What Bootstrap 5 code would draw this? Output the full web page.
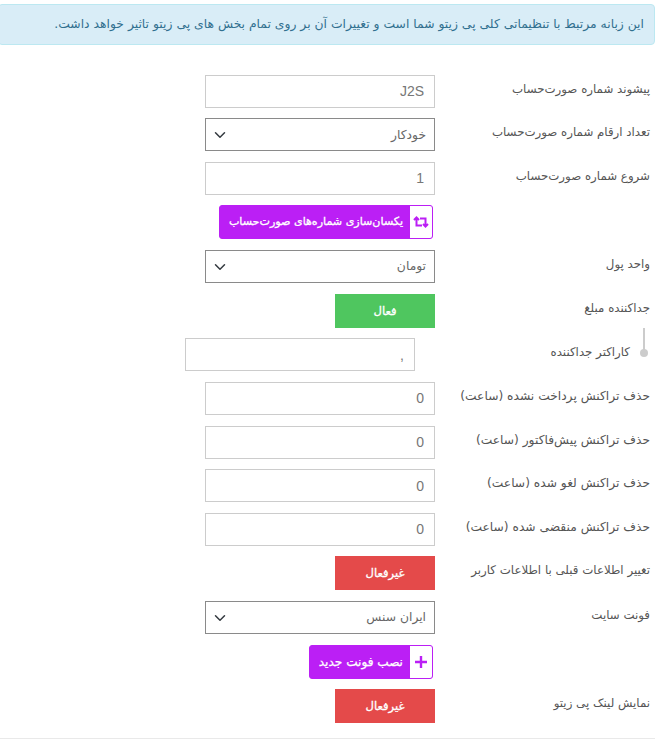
<!DOCTYPE html>
<html lang="fa" dir="rtl">
<head>
<meta charset="utf-8">
<title>تنظیمات</title>
<link rel="stylesheet" href="https://cdn.jsdelivr.net/npm/bootstrap@5.3.0/dist/css/bootstrap.min.css">
<style>
html,body{background:#fff;overflow:hidden}
body{font-family:"DejaVu Sans",sans-serif;font-size:12px;color:#555;height:745px}
.page-wrap{padding:4px 12px 0 0;margin-left:-2px}
.note{background:#d9edf7;border:1px solid #bce8f1;color:#31708f;border-radius:4px;height:41px;padding:0 10px;font-size:12.35px;margin:0 0 29.6px 0;display:flex;align-items:center;white-space:nowrap}
.field-row{display:flex;align-items:flex-start;margin-bottom:10.63px;padding-right:5px;position:relative;margin-left:2px}
.field-label{width:215px;flex:none;font-size:11.8px;line-height:29px;color:#555;white-space:nowrap}
.field-label.lab-wide{font-size:12.25px}
.field-ctl{width:230px;flex:none}
.field-row.sub{padding-right:25px}
.field-row.sub::before{content:"";position:absolute;right:10px;top:-10px;height:24px;width:2px;background:#ccc}
.field-row.sub::after{content:"";position:absolute;right:7px;top:11px;width:8px;height:8px;border-radius:50%;background:#ccc}
.form-control.plain,.form-select.plain{height:33px;min-height:33px;border-radius:0;font-size:12.3px;color:#666;box-shadow:none;padding:0 10px;font-family:"DejaVu Sans",sans-serif}
.form-control.plain{border:1px solid #ccc}
.form-control.num{font-family:"Liberation Sans",sans-serif;font-size:14px;color:#777}
.form-select.plain{border:1px solid #8a8a8a;background-position:left 6px center;padding:0 8px 0 30px}
.state-btn{display:block;width:100px;height:34px;border:0;border-radius:0;color:#fff;font-size:11.6px;font-weight:400;-webkit-text-stroke:.3px #fff;line-height:34px;padding:0;text-align:center}
.state-on{background:#4fc65f}
.state-off{background:#e44a4a}
.act-btn{display:inline-flex;height:34px;border:1px solid #bb1ff5;border-radius:3px;background:#bb1ff5;color:#fff;font-size:11.1px;font-weight:400;-webkit-text-stroke:.3px #fff;padding:0;overflow:hidden;align-items:stretch;white-space:nowrap}
.act-btn.wide-txt{font-size:12.1px}
.act-ico{width:22px;background:#fff;display:flex;align-items:center;justify-content:center;flex:none;-webkit-text-stroke:0}
.act-txt{display:flex;align-items:center;padding:0 7px 0 9px}
.act-slot{width:230px;flex:none;display:flex;justify-content:flex-start;padding-right:2px}
.foot-line{border-top:1px solid #e9e9e9;margin:15px 0 0 0}
</style>
</head>
<body>
<div class="page-wrap">
  <div class="note">این زبانه مرتبط با تنظیماتی کلی پی زیتو شما است و تغییرات آن بر روی تمام بخش های پی زیتو تاثیر خواهد داشت.</div>

  <div class="field-row"><div class="field-label">پیشوند شماره صورت‌حساب</div><div class="field-ctl"><input class="form-control plain num" value="J2S"></div></div>
  <div class="field-row"><div class="field-label">تعداد ارقام شماره صورت‌حساب</div><div class="field-ctl"><select class="form-select plain"><option>خودکار</option></select></div></div>
  <div class="field-row"><div class="field-label">شروع شماره صورت‌حساب</div><div class="field-ctl"><input class="form-control plain num" value="1"></div></div>
  <div class="field-row"><div class="field-label"></div><div class="act-slot"><button class="btn act-btn"><span class="act-ico"><svg width="16" height="14" viewBox="0 0 16 14" fill="none" stroke="#bb1ff5" stroke-width="2"><path d="M15 9 12.5 11.5 10 9M12.5 11V3.5H7"/><path d="M1 5 3.5 2.5 6 5M3.5 3v7.5H9"/></svg></span><span class="act-txt">یکسان‌سازی شماره‌های صورت‌حساب</span></button></div></div>
  <div class="field-row"><div class="field-label">واحد پول</div><div class="field-ctl"><select class="form-select plain"><option>تومان</option></select></div></div>
  <div class="field-row"><div class="field-label">جداکننده مبلغ</div><div class="field-ctl"><button class="btn state-btn state-on">فعال</button></div></div>
  <div class="field-row sub"><div class="field-label">کاراکتر جداکننده</div><div class="field-ctl"><input class="form-control plain num" value=","></div></div>
  <div class="field-row"><div class="field-label lab-wide">حذف تراکنش پرداخت نشده (ساعت)</div><div class="field-ctl"><input class="form-control plain num" value="0"></div></div>
  <div class="field-row"><div class="field-label lab-wide">حذف تراکنش پیش‌فاکتور (ساعت)</div><div class="field-ctl"><input class="form-control plain num" value="0"></div></div>
  <div class="field-row"><div class="field-label lab-wide">حذف تراکنش لغو شده (ساعت)</div><div class="field-ctl"><input class="form-control plain num" value="0"></div></div>
  <div class="field-row"><div class="field-label lab-wide">حذف تراکنش منقضی شده (ساعت)</div><div class="field-ctl"><input class="form-control plain num" value="0"></div></div>
  <div class="field-row"><div class="field-label">تغییر اطلاعات قبلی با اطلاعات کاربر</div><div class="field-ctl"><button class="btn state-btn state-off">غیرفعال</button></div></div>
  <div class="field-row"><div class="field-label">فونت سایت</div><div class="field-ctl"><select class="form-select plain"><option>ایران سنس</option></select></div></div>
  <div class="field-row"><div class="field-label"></div><div class="act-slot"><button class="btn act-btn wide-txt"><span class="act-ico"><svg width="14" height="14" viewBox="0 0 14 14" fill="none" stroke="#bb1ff5" stroke-width="2.4"><path d="M7 1v12M1 7h12"/></svg></span><span class="act-txt">نصب فونت جدید</span></button></div></div>
  <div class="field-row"><div class="field-label">نمایش لینک پی زیتو</div><div class="field-ctl"><button class="btn state-btn state-off">غیرفعال</button></div></div>
  <div class="foot-line"></div>
</div>
<script src="https://cdn.jsdelivr.net/npm/bootstrap@5.3.0/dist/js/bootstrap.bundle.min.js"></script>
</body>
</html>
